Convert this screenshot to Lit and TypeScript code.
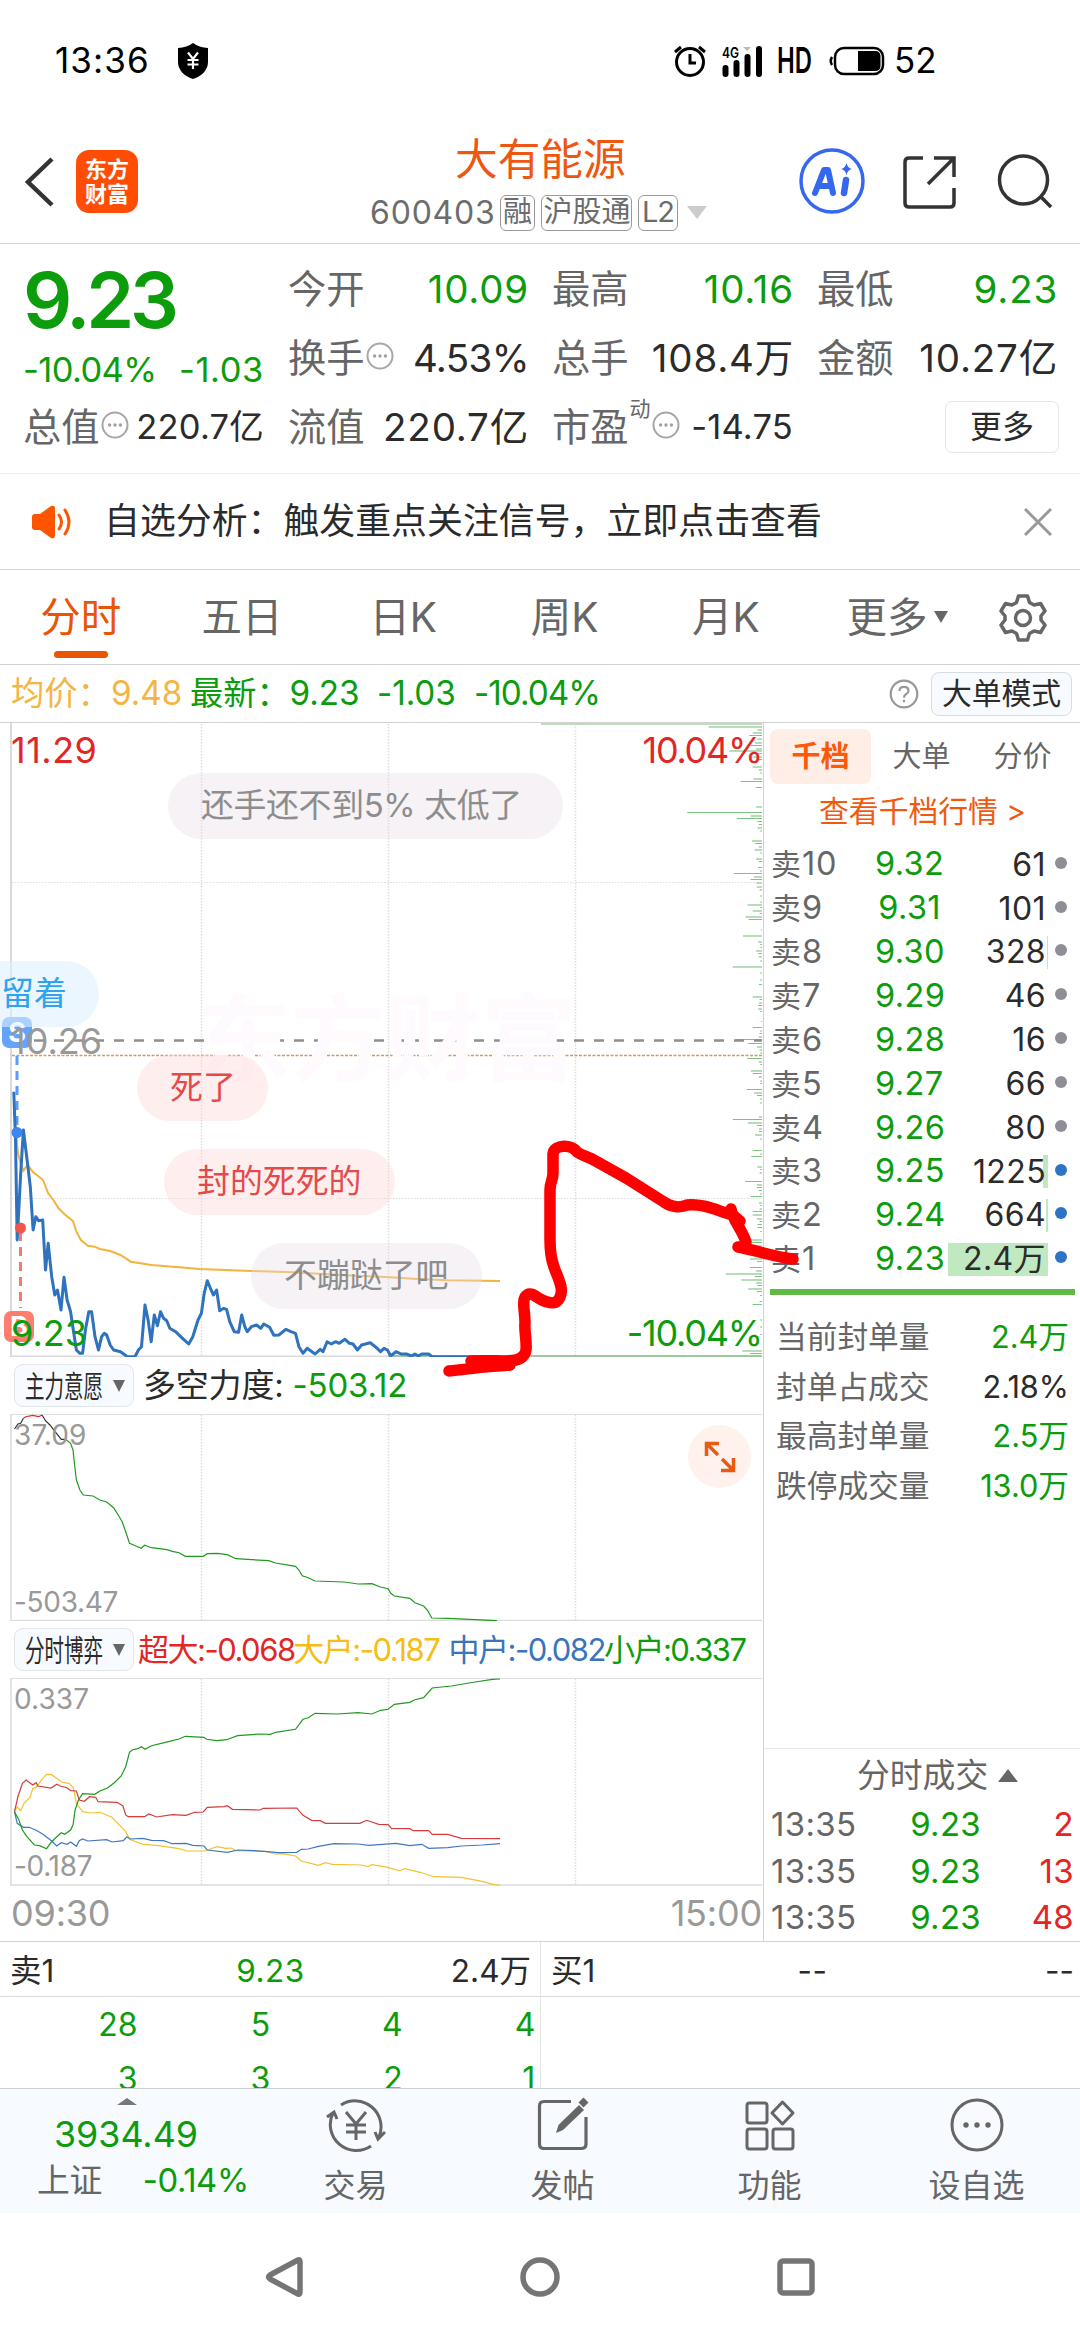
import { LitElement, html, svg, css } from "lit";
import { customElement } from "lit/decorators.js";
import { styleMap } from "lit/directives/style-map.js";

/* Series are stored as "x,y x,y ..." samples; each panel has its own vertical origin. */
const SX = 1 / 2.904;
const SY = 1 / 3;
const toPoints = (raw: string, originY: number) =>
  raw
    .trim()
    .split(/\s+/)
    .map((p) => {
      const [x, y] = p.split(",").map(Number);
      return `${(x * SX).toFixed(1)},${(originY + y * SY).toFixed(1)}`;
    })
    .join(" ");

const PRICE = `40,155 45,300 50,600 60,400 68,270 80,370 88,440 96,570 104,530 112,542 124,540 132,690 140,610 150,710 159,765 167,750 177,810 186,712 195,780 205,815 213,870 222,930 232,940 240,940 248,870 258,815 266,815 276,890 286,930 295,890 303,880 310,885 320,915 330,930 350,935 370,950 392,950 402,930 411,920 421,795 430,840 439,905 448,825 457,857 466,815 475,835 484,842 493,865 510,875 530,895 548,912 560,890 575,840 585,820 593,760 602,722 611,745 620,765 629,750 638,812 650,805 658,808 667,845 680,875 693,877 702,825 711,860 718,875 730,860 745,855 757,865 766,852 783,862 795,886 810,885 830,868 845,875 858,880 868,920 880,940 892,925 915,942 930,928 938,935 950,905 962,912 975,905 985,910 1002,898 1015,910 1025,912 1038,930 1050,915 1075,908 1090,920 1105,935 1115,925 1125,930 1135,948 1150,935 1165,942 1180,942 1195,948 1205,942 1215,948 1225,942 1245,942 1255,950 1450,950`;
const AVERAGE = `45,250 52,340 60,370 68,392 80,375 95,395 115,412 125,420 140,460 155,480 170,505 190,525 212,543 222,575 235,600 255,617 275,620 290,627 320,633 350,645 380,665 440,675 520,682 580,687 730,693 850,697 1000,706 1120,711 1200,716 1300,721 1452,723`;
const POWER: [string, string][] = [
  ["#333", "42,237 52,222 60,220 68,205"],
  ["#e02828", "68,205 75,200 95,196 112,200 122,195"],
  ["#333", "122,195 132,212 145,225 160,245 178,268 190,268"],
  ["#1f9a1f", "190,268 205,280 212,300 216,340 222,390 232,420 242,435 270,438 290,450 310,456 330,473 345,498 355,515 365,545 376,580 395,588 410,595 420,586 440,593 485,599 500,604 520,608 538,619 590,619 602,611 630,610 660,614 685,626 780,632 800,639 858,649 868,660 878,677 895,683 915,693 1000,696 1040,702 1080,701 1105,711 1127,716 1135,730 1145,738 1190,745 1205,758 1230,768 1242,782 1254,804 1300,805 1443,812"],
];
const GAME: [string, string][] = [
  ["#f2c230", "42,515 50,500 60,512 70,490 88,470 95,445 105,443 120,420 135,403 150,404 180,427 200,430 213,443 222,490 240,515 265,519 290,517 325,532 345,553 365,575 376,598 415,613 455,616 520,626 542,633 595,633 630,620 655,625 672,624 685,632 770,634 800,642 820,641 858,648 875,663 925,676 945,668 965,673 1050,675 1068,680 1080,674 1125,682 1160,692 1175,686 1220,697 1260,710 1340,712 1400,724 1435,734 1452,735"],
  ["#d83a3a", "42,515 52,470 65,430 76,420 95,435 105,428 110,438 148,444 165,433 175,438 195,443 205,452 222,453 230,480 245,484 260,470 278,472 285,485 340,487 357,498 365,525 372,530 420,530 432,522 455,531 500,524 540,526 565,517 590,516 602,502 650,500 660,497 675,508 755,510 765,505 862,504 880,526 905,541 930,542 945,550 1045,550 1065,541 1100,553 1127,554 1137,565 1190,566 1200,572 1245,572 1255,583 1300,583 1340,595 1452,596"],
  ["#3f78c0", "42,515 50,550 68,562 85,562 105,571 125,583 150,603 165,618 178,608 195,613 205,606 222,619 230,602 240,597 255,603 310,599 325,606 358,602 368,591 380,597 415,595 440,601 475,602 500,611 540,610 560,616 592,618 602,630 660,637 690,630 740,632 810,638 862,637 875,628 895,627 925,619 970,611 1040,612 1070,616 1150,610 1190,617 1225,613 1245,625 1300,623 1340,618 1400,615 1452,611"],
  ["#1f9a1f", "42,515 55,540 65,570 78,590 100,615 115,617 135,626 150,605 165,590 178,578 188,583 205,570 212,555 218,510 228,480 240,461 275,463 290,453 312,444 332,428 352,408 365,380 376,337 385,329 400,326 411,320 421,328 440,317 480,307 520,297 538,289 592,292 600,298 630,302 658,299 690,287 755,282 785,283 800,277 858,268 880,238 895,233 915,220 980,222 1040,218 1080,222 1105,211 1127,208 1145,193 1190,187 1205,179 1230,173 1255,144 1310,138 1380,126 1430,118 1452,117"],
];

/* Volume-at-price bars: [row, left end], growing leftwards from the right border. */
const UPPER = "80:490 90:632 98:618 107:608 118:632 128:625 137:612 146:628 154:550 163:635 172:620 181:630 200:618 210:636 220:640 238:620 247:583 265:627 320:628 339:428 348:612 357:572 367:632 375:636 384:632 394:640 422:616 431:625 440:636 450:624 460:640 478:628 487:636 505:634 514:640 523:563 532:622 541:612 550:628 560:630 570:638 588:640 606:640 616:603 625:640 634:618 643:638 652:597 661:606 690:642 708:590 726:634 735:640 745:640 754:628 763:634 772:636 782:640 800:560 820:640 840:640 855:636 892:618 901:638 910:636 919:634 928:634 937:640 965:642 985:618 994:640 1003:638 1012:636 1021:568 1031:604 1040:630 1050:638 1058:640 1067:640";
const LOWER = "57:602 66:636 75:640 94:613 103:618 112:636 122:640 131:640 149:600 158:622 167:630 176:640 190:640 232:636 241:560 250:604 259:630 268:636 277:636 286:625 296:640 333:618 342:640 351:614 380:632 389:640 400:638 425:596 434:630 443:630 453:636 462:640 471:612 490:636 499:640 508:638 517:618 526:618 536:630 545:638 555:632 565:632 575:640 600:615 609:610 618:620 637:615 646:630 656:610 665:630 683:610 692:628 702:540 711:624 720:585 730:628 739:632 748:605 757:630 767:640 785:638 795:618 840:640 860:640 885:640 932:588 941:610";
const histogram = (raw: string, originY: number) =>
  raw.split(" ").map((b) => {
    const [y, x] = b.split(":").map(Number);
    const w = (645 - x) * SX;
    return svg`<rect x=${762 - w} y=${Math.round(originY + y * SY - 1)} width=${w} height=${y % 2 ? 1 : 2} fill=${y % 2 ? "#7fc384" : "#b5deb8"} />`;
  });

const ASKS = [
  { n: "10", price: "9.32", vol: "61", bar: 0, big: false },
  { n: "9", price: "9.31", vol: "101", bar: 0, big: false },
  { n: "8", price: "9.30", vol: "328", bar: 1, big: false },
  { n: "7", price: "9.29", vol: "46", bar: 0, big: false },
  { n: "6", price: "9.28", vol: "16", bar: 0, big: false },
  { n: "5", price: "9.27", vol: "66", bar: 0, big: false },
  { n: "4", price: "9.26", vol: "80", bar: 0, big: false },
  { n: "3", price: "9.25", vol: "1225", bar: 5, big: true },
  { n: "2", price: "9.24", vol: "664", bar: 2, big: true },
  { n: "1", price: "9.23", vol: "2.4万", bar: 100, big: true },
];

const verticals = (y1: number, y2: number) =>
  [201, 388, 575].map(
    (x) => svg`<line x1=${x + 0.5} x2=${x + 0.5} y1=${y1} y2=${y2} stroke="#dcdcdc" stroke-width="1.5" stroke-dasharray="1.5 1.5" />`
  );

const infoDot = html`<svg class="info-dot" viewBox="0 0 28 28" fill="none"><circle cx="14" cy="14" r="12.5" stroke="#a6a6a6" stroke-width="2" /><g fill="#a0a0a0"><circle cx="8.6" cy="14" r="1.7" /><circle cx="14" cy="14" r="1.7" /><circle cx="19.4" cy="14" r="1.7" /></g></svg>`;

@customElement("app-root")
export class AppRoot extends LitElement {
  static styles = css`
    :host { display: block; width: 1080px; height: 2340px; overflow: hidden; background: #fff; color: #2b2b2b;
      font-family: Inter, "Noto Sans CJK SC", sans-serif; font-size: 33px; line-height: 1; }
    * { box-sizing: border-box; }
    svg { display: block; flex: none; }
    span { white-space: nowrap; }
    .green { color: #0c9c0c; }
    .red { color: #e22626; }
    .grey { color: #666; }

    .status { height: 120px; display: flex; align-items: center; padding: 1px 143px 0 55px; color: #000; font-size: 35px; }
    .status .clock { width: 123px; letter-spacing: 1.1px; }
    .status .spring { flex: 1; }
    .status .hd { font-size: 35px; font-weight: 600; transform: scaleX(.68); transform-origin: 0 50%; width: 52px; margin-left: -1px; }
    .status .pct { margin-left: 9px; width: 43px; }
    .status .alarm { margin-right: 15px; }
    .status .signal { margin-right: 15px; }

    .header { height: 124px; border-bottom: 1px solid #d2d2d2; display: flex; align-items: flex-start; }
    .back { margin: 36px 22px 0 24px; }
    .logo { margin-top: 30px; width: 62px; height: 63px; border-radius: 13px; background: #ff4d05; color: #fff; font-size: 22px;
      line-height: 25px; font-weight: 700; display: grid; place-content: center; }
    .names { flex: 1; margin-left: 232px; height: 123px; display: flex; flex-direction: column; }
    .title { margin: 18px 0 0 85px; font-size: 42.7px; color: #ee5711; line-height: 44px; }
    .sub { display: flex; align-items: center; margin-top: 12px; height: 37px; gap: 6px; color: #6c6c6c; font-size: 32px; }
    .sub .code { letter-spacing: .8px; width: 124px; }
    .tag { border: 1.5px solid #9a9a9a; border-radius: 6px; height: 36px; line-height: 32px; padding: 0 1.5px; font-size: 29px; text-align: center; }
    .tag.l2 { width: 40px; font-size: 29px; letter-spacing: -1px; }
    .tag.rong { width: 35px; }
    .tag.hu { width: 91px; }
    .caret { width: 0; height: 0; border: 10px solid transparent; border-bottom: 0; border-top: 13px solid #ccc; margin-left: 3px; }
    .tools { display: flex; margin-right: 26px; padding-top: 28px; }
    .tools svg + svg { margin-left: 33.5px; }

    .quote { height: 230px; border-bottom: 1px solid #ececec; display: grid; grid-template-columns: 241px 240px 241px 240px; column-gap: 24px;
      padding-left: 23px; padding-top: 11px; grid-template-rows: 69px 69px 69px; font-size: 38.5px; }
    .cell { display: flex; align-items: center; }
    .cell .v { margin-left: auto; letter-spacing: .8px; margin-right: -1px; }
    .cell .v.pc { letter-spacing: -.6px; }
    .cell .grey { font-size: 38.3px; }
    .lead { grid-row: 1 / span 2; display: flex; flex-direction: column; }
    .big { font-size: 77px; font-weight: 600; letter-spacing: -4.2px; margin-top: 7px; height: 77px; }
    .chg { display: flex; justify-content: space-between; font-size: 34.5px; margin-top: 14px; letter-spacing: -.6px; }
    .chg span + span { letter-spacing: .6px; }
    .info-dot { width: 28px; height: 28px; margin-left: 1px; margin-top: -6px; }
    .small .v { font-size: 34.5px; letter-spacing: .2px; margin-right: 0; }
    .sup { font-size: 21px; color: #666; align-self: flex-start; margin: 5px 0 0 1px; }
    .more { justify-self: end; align-self: center; width: 114px; height: 52px; border: 1.5px solid #e6e6e6; border-radius: 7px;
      display: grid; place-content: center; font-size: 32px; margin: 0 -2px 1px 0; }

    .notice { height: 96px; border-bottom: 1px solid #d6d6d6; display: flex; align-items: center; padding: 0 28px 0 31px; font-size: 35.9px; }
    .notice span { margin-left: 30px; flex: 1; }

    .tabs { height: 95px; border-bottom: 1px solid #d2d2d2; display: flex; color: #666; font-size: 40.5px; }
    .tab { width: 161.3px; height: 94px; display: flex; flex-direction: column; align-items: center; padding-top: 27px; line-height: 41px; }
    .tab.on { color: #ea5504; }
    .tab.on::after { content: ""; width: 54px; height: 7px; border-radius: 4px; background: #ea5504; margin-top: 13px; }
    .tab.menu { flex-direction: row; align-items: flex-start; width: 110px; margin-left: 40px; gap: 7px; }
    .tab.menu i { width: 0; height: 0; margin-top: 14px; border: 7px solid transparent; border-bottom: 0; border-top: 12px solid #666; }
    .gear { margin: 23px 0 0 42px; }

    .prices { height: 58px; border-bottom: 1px solid #d2d2d2; display: flex; align-items: center; padding: 1px 8px 0 11px; font-size: 33.3px; }
    .prices .avg { color: #f5b544; width: 179px; }
    .prices .last { width: 187px; letter-spacing: -.1px; }
    .prices .d { width: 97px; letter-spacing: -.1px; }
    .prices .pc { letter-spacing: -1px; }
    .prices .spring { flex: 1; }
    .mode { width: 141px; height: 44px; border: 1.5px solid #d9dce3; border-radius: 8px; background: #f7faff; font-size: 29.8px; display: grid; place-content: center; margin-left: 12px; }

    .main { position: relative; height: 1219px; border-bottom: 1px solid #d2d2d2; display: flex; }
    .charts { width: 764px; border-right: 1px solid #d2d2d2; display: flex; flex-direction: column; }
    .plot { position: relative; }
    .lab { position: absolute; font-size: 36px; letter-spacing: 0; }
    .lab.s { font-size: 28px; color: #999; letter-spacing: .1px; }
    .tl { left: 11px; top: 9px; letter-spacing: .5px; }
    .tr { right: 1px; top: 9px; letter-spacing: -1.3px; }
    .ml { left: 11px; top: 300px; color: #999; }
    .bl { left: 11px; top: 592px; }
    .br { right: 1px; top: 592px; letter-spacing: -1.2px; }
    .s.tl { left: 14px; }
    .s.p1 { top: 7px; }
    .s.p2 { top: 174px; left: 14px; letter-spacing: -.3px; }
    .mark { position: absolute; left: 196px; top: 265px; font-size: 95px; font-weight: 700; line-height: 104px; color: #fefafe; }
    .chip { position: absolute; height: 66px; border-radius: 33px; line-height: 65px; font-size: 32.9px; padding-left: 33px; }
    .chip.g { background: rgba(231, 221, 231, .38); color: #8d8d8d; }
    .chip.r { background: rgba(255, 214, 214, .42); color: #e34a4a; }
    .chip.b { background: rgba(222, 240, 254, .6); color: #2fa3ee; }
    .c1 { left: 168px; top: 50px; width: 395px; letter-spacing: -.35px; }
    .c2 { left: -32px; top: 238px; width: 131px; }
    .c3 { left: 137px; top: 332px; width: 131px; }
    .c4 { left: 164px; top: 426px; width: 231px; }
    .c5 { left: 251px; top: 520px; width: 231px; }
    .badge { position: absolute; width: 30px; height: 31px; border-radius: 7px; color: #fff; font-size: 27px; line-height: 31px; font-weight: 700; text-align: center; }
    .badge.sell { left: 2px; top: 294px; background: #64a4ff; }
    .badge.buy { left: 4px; top: 588px; background: #ff7d6e; }

    .bar { height: 57px; display: flex; align-items: center; padding-left: 14px; }
    .pick { width: 120px; height: 43px; border: 1.5px solid #e2e5ea; border-radius: 9px; background: #f7faff; display: flex; align-items: center; padding-left: 10px; }
    .pick span { font-size: 30px; transform: scaleX(.65); transform-origin: 0 50%; width: 88px; }
    .pick i { width: 0; height: 0; border: 6.5px solid transparent; border-bottom: 0; border-top: 12px solid #666; }
    .force { margin-left: 9px; font-size: 33px; letter-spacing: -.2px; }
    .force .green { margin-left: 0; }
    .quad { display: flex; font-size: 31px; margin-left: 4px; letter-spacing: -1.5px; }
    .quad span { width: 155.3px; }
    .quad .yellow { color: #f5bd15; }
    .quad .blue { color: #3a74bc; }
    .expand { position: absolute; left: 688px; top: 11px; width: 63px; height: 63px; border-radius: 50%; background: #fff1ec; display: grid; place-content: center; }
    .axis { display: flex; justify-content: space-between; padding: 9px 1px 0 11px; font-size: 36px; color: #999; letter-spacing: -.2px; }

    .side { width: 316px; padding: 6px 6px 0; display: flex; flex-direction: column; }
    .stabs { display: flex; font-size: 29px; color: #666; height: 55px; }
    .stabs span { width: 101px; line-height: 55px; text-align: center; }
    .stabs .on { background: #ffeee6; color: #fa5a0a; font-weight: 700; border-radius: 8px; }
    .link { height: 59px; line-height: 55px; text-align: center; font-size: 29.8px; color: #f2590f; padding-left: 1px; }
    .ask { height: 44px; display: grid; grid-template-columns: 104px 66px 1fr 26px; align-items: center; padding-left: 1px; font-size: 32.5px; letter-spacing: .4px; }
    .ask .n { color: #666; letter-spacing: .9px; }
    .ask .n b { font-weight: 400; font-size: 30px; letter-spacing: 0; margin-right: 1px; }
    .ask .p { color: #0c9c0c; text-align: right; }
    .ask .vol { display: grid; align-items: center; justify-items: end; }
    .ask .vol > * { grid-area: 1 / 1; }
    .ask .fill { height: 33px; background: #c0e8c1; }
    .ask .vol span { padding-right: 2px; }
    .ask .vol { font-size: 32px; }
    .ask .dot { width: 12px; height: 12px; border-radius: 50%; background: #8e8e96; margin: -4px 0 0 7px; }
    .ask .dot.big { background: #2f74c4; }
    .rule { height: 6px; background: #60b845; margin: 8px 0 17px; width: 305px; }
    .stat { height: 50px; display: flex; align-items: center; justify-content: space-between; padding: 0 5px 0 6px; font-size: 30.7px; }
    .trades { margin: 236px -6px 0; border-top: 1px solid #e8e8e8; padding: 0 6px 0 7px; }
    .trades .head { display: flex; align-items: center; gap: 10px; height: 53px; padding-left: 86px; font-size: 32.8px; color: #666; }
    .trades .head i { width: 0; height: 0; border: 10px solid transparent; border-top: 0; border-bottom: 13px solid #666; }
    .trade { display: grid; grid-template-columns: 84px 126px 1fr; height: 46.5px; align-items: center; font-size: 33px; letter-spacing: .3px; }
    .trade > * + * { text-align: right; }
    .ink { position: absolute; left: 0; top: 0; pointer-events: none; }

    .book { height: 55px; border-bottom: 1px solid #dcdcdc; display: flex; font-size: 31.5px; }
    .half { width: 540px; display: grid; grid-template-columns: 1fr 1fr 1fr; align-items: center; padding: 3px 9px 0 10px; }
    .half + .half { border-left: 1px solid #e4e4e4; padding-right: 6px; }
    .half > :nth-child(2) { text-align: center; letter-spacing: .5px; }
    .half > :nth-child(3) { text-align: right; }
    .depth { height: 91px; overflow: hidden; display: flex; }
    .queue { width: 541px; border-right: 1px solid #e4e4e4; display: grid; grid-template-columns: repeat(4, 132.6px); grid-auto-rows: 54px;
      padding: 1px 0 0 5px; text-align: right; align-items: center; font-size: 32px; }

    .nav { height: 125px; background: #f7faff; border-top: 1px solid #ccd0d6; display: flex; color: #666; font-size: 32px; }
    .index { width: 252px; padding-left: 37px; }
    .index i { display: block; width: 0; height: 0; margin: 9px 0 0 80px; border: 10px solid transparent; border-top: 0; border-bottom: 7px solid #777; }
    .index .pts { font-size: 35.8px; margin: 12px 0 11px 17px; }
    .index .row { display: flex; gap: 41px; align-items: center; font-size: 32.8px; letter-spacing: -.4px; }
    .item { width: 207px; display: flex; flex-direction: column; align-items: center; padding-top: 8px; gap: 17px; }
    .sysnav { height: 127px; display: flex; align-items: center; justify-content: center; gap: 212px; }
  `;

  render() {
    return html`
      <div class="status">
        <span class="clock">13:36</span>
        <svg width="30" height="36" viewBox="0 0 30 36"><path d="M15 0 C19 3 24 4.500 30 5 V19 C30 27 24 33 15 36 C6 33 0 27 0 19 V5 C6 4.500 11 3 15 0Z" fill="#000" /><path d="M10 9.500 L15 16 L20 9.500 M15 16 V26 M9.500 17 H20.500 M9.500 21.500 H20.500" stroke="#fff" stroke-width="2.200" fill="none" /></svg>
        <div class="spring"></div>
        <svg class="alarm" width="34" height="34" viewBox="0 0 34 34" fill="none" stroke="#000" stroke-width="3"><circle cx="17" cy="18" r="13.500" /><path d="M17 10 V19 H23 M2 8 L8 3 M32 8 L26 3" /></svg>
        <svg class="signal" width="41" height="34" viewBox="0 0 41 34"><text x="0" y="14" font-family="Inter" font-size="14" font-weight="600" textLength="17" lengthAdjust="spacingAndGlyphs">4G</text><path d="M3.500 24 V30 M14.500 19 V30 M25.500 13 V30 M37 5 V30" stroke="#000" stroke-width="6" stroke-linecap="round" /><path d="M21 3 h8 l-4 4z" fill="#bbb" /></svg>
        <span class="hd">HD</span>
        <svg width="56" height="30" viewBox="0 0 56 30"><rect x="6" y="2" width="48" height="26" rx="9" fill="none" stroke="#000" stroke-width="2.500" /><path d="M29 5 H46 Q51.500 5 51.500 10.500 V19.500 Q51.500 25 46 25 H29Z" /><path d="M3 11 Q0.500 15 3 19" stroke="#000" stroke-width="2.500" fill="none" /></svg>
        <span class="pct">52</span>
      </div>

      <div class="header">
        <svg class="back" width="30" height="52" viewBox="0 0 30 52" fill="none" stroke="#333" stroke-width="4.500"><path d="M28 3 L4 26 L28 49" /></svg>
        <div class="logo"><span>东方</span><span>财富</span></div>
        <div class="names">
          <span class="title">大有能源</span>
          <div class="sub"><span class="code">600403</span><span class="tag rong">融</span><span class="tag hu">沪股通</span><span class="tag l2">L2</span><i class="caret"></i></div>
        </div>
        <div class="tools">
          <svg width="66" height="66" viewBox="0 0 66 66"><circle cx="33" cy="33" r="31" fill="none" stroke="#3568f0" stroke-width="3.500" /><path d="M16 45 L25 22 H29 L34 45 M19 38 H32" fill="none" stroke="#3568f0" stroke-width="6" stroke-linejoin="round" stroke-linecap="round" /><path d="M47 32 L45 45" stroke="#3568f0" stroke-width="6.500" stroke-linecap="round" /><path d="M47.500 15 Q48.500 20 53 21 Q48.500 22 47.500 27 Q46.500 22 42 21 Q46.500 20 47.500 15Z" fill="#3568f0" /></svg>
          <svg width="62" height="66" viewBox="0 0 62 66" fill="none" stroke="#333" stroke-width="3.500"><path d="M24 10 H10 Q6 10 6 14 V55 Q6 59 10 59 H51 Q55 59 55 55 V40 M35 10 H55 V29 M55 10 L29 36" /></svg>
          <svg width="60" height="66" viewBox="0 0 60 66" fill="none" stroke="#333" stroke-width="3.500"><circle cx="29.500" cy="32" r="24" /><path d="M46 48 L57 59" /></svg>
        </div>
      </div>

      <div class="quote">
        <div class="lead"><span class="big green">9.23</span><div class="chg green"><span>-10.04%</span><span>-1.03</span></div></div>
        <div class="cell"><span class="grey">今开</span><span class="v green">10.09</span></div>
        <div class="cell"><span class="grey">最高</span><span class="v green">10.16</span></div>
        <div class="cell"><span class="grey">最低</span><span class="v green">9.23</span></div>
        <div class="cell"><span class="grey">换手</span>${infoDot}<span class="v pc">4.53%</span></div>
        <div class="cell"><span class="grey">总手</span><span class="v">108.4万</span></div>
        <div class="cell"><span class="grey">金额</span><span class="v">10.27亿</span></div>
        <div class="cell small"><span class="grey">总值</span>${infoDot}<span class="v">220.7亿</span></div>
        <div class="cell"><span class="grey">流值</span><span class="v">220.7亿</span></div>
        <div class="cell small"><span class="grey">市盈</span><span class="sup">动</span>${infoDot}<span class="v">-14.75</span></div>
        <div class="more">更多</div>
      </div>

      <div class="notice">
        <svg width="43" height="34" viewBox="0 0 43 34"><path d="M1 12 Q1 9 4 9 H9 L20 1 Q24 0 24 3 V31 Q24 34 20 33 L9 25 H4 Q1 25 1 22Z" fill="#ff5500" /><path d="M28 10 Q33 17 28 24 M34 5 Q42 17 34 29" fill="none" stroke="#ff5500" stroke-width="3" stroke-linecap="round" /></svg>
        <span>自选分析：触发重点关注信号，立即点击查看</span>
        <svg width="28" height="28" viewBox="0 0 28 28" stroke="#999" stroke-width="3"><path d="M1 1 L27 27 M27 1 L1 27" /></svg>
      </div>

      <div class="tabs">
        <div class="tab on">分时</div><div class="tab">五日</div><div class="tab">日K</div><div class="tab">周K</div><div class="tab">月K</div>
        <div class="tab menu"><span>更多</span><i></i></div>
        <svg class="gear" width="50" height="50" viewBox="0 0 50 50" fill="none" stroke="#666" stroke-width="3.500" stroke-linejoin="round"><path d="M20.500 3 H29.500 L31.500 9.500 L36 12 L42.500 10.500 L47 18 L43 23 V27 L47 32 L42.500 39.500 L36 38 L31.500 40.500 L29.500 47 H20.500 L18.500 40.500 L14 38 L7.500 39.500 L3 32 L7 27 V23 L3 18 L7.500 10.500 L14 12 L18.500 9.500Z" /><circle cx="25" cy="25" r="7.500" /></svg>
      </div>

      <div class="prices">
        <span class="avg">均价：9.48</span><span class="green last">最新：9.23</span><span class="green d">-1.03</span><span class="green pc">-10.04%</span>
        <div class="spring"></div>
        <svg width="30" height="30" viewBox="0 0 30 30" fill="none" stroke="#999" stroke-width="2.200"><circle cx="15" cy="15" r="13.300" /><path d="M10.500 12 Q10.500 7.800 15 7.800 Q19.500 7.800 19.500 11.800 Q19.500 14 17 15.300 Q15 16.500 15 18.800 M15 20.800 V23.200" /></svg>
        <div class="mode">大单模式</div>
      </div>

      <div class="main">
        <div class="charts">
          <div class="plot">
            <span class="mark">东方财富</span>
            <svg width="763" height="634" viewBox="0 723 763 634" fill="none">
              <path d="M11 723 V1356.500 H500" stroke="#d9d9d9" stroke-width="2" />
              ${verticals(724, 1356)}
              <path d="M12 882.500 H762 M12 1198.500 H762" stroke="#dcdcdc" stroke-dasharray="1.500 1.500" />
              <rect x="541" y="723" width="221" height="2" fill="#bfdcbf" />
              ${histogram(UPPER, 700)}${histogram(LOWER, 1040)}
              <path d="M34 1040.500 H762" stroke="#8f8f8f" stroke-width="2.500" stroke-dasharray="10 10" />
              <path d="M12 1055.500 H762" stroke="#cf9a68" stroke-width="1.700" stroke-dasharray="3 1.500" />
              <path d="M388 1356 H762" stroke="#9cc99f" stroke-width="2" />
              <path d="M17 1056 V1130" stroke="#5a9cf8" stroke-width="3" stroke-dasharray="9 6" />
              <path d="M20.500 1232 V1308" stroke="#f47a6c" stroke-width="3" stroke-dasharray="9 6" />
              <polyline points=${toPoints(AVERAGE, 1040)} stroke="#f3b33c" stroke-width="2" />
              <polyline points=${toPoints(PRICE, 1040)} stroke="#2f72bd" stroke-width="3" stroke-linejoin="round" />
              <circle cx="17" cy="1132.500" r="5.500" fill="#3c86f2" /><circle cx="20.500" cy="1228" r="5.500" fill="#f05548" />
            </svg>
            <span class="badge sell">S</span><span class="badge buy">B</span>
            <span class="chip g c1">还手还不到5% 太低了</span>
            <span class="chip b c2">留着</span>
            <span class="chip r c3">死了</span>
            <span class="chip r c4">封的死死的</span>
            <span class="chip g c5">不蹦跶了吧</span>
            <span class="lab tl red">11.29</span><span class="lab tr red">10.04%</span>
            <span class="lab ml">10.26</span>
            <span class="lab bl green">9.23</span><span class="lab br green">-10.04%</span>
          </div>
          <div class="bar"><div class="pick"><span>主力意愿</span><i></i></div><span class="force">多空力度: <span class="green">-503.12</span></span></div>
          <div class="plot">
            <svg width="763" height="207" viewBox="0 1414 763 207" fill="none">
              <path d="M11 1414.500 H762" stroke="#e0e0e0" /><path d="M11 1414 V1620.500 H762" stroke="#dcdcdc" stroke-width="1.600" />
              ${verticals(1415, 1620)}
              ${POWER.map(([c, p]) => svg`<polyline points=${toPoints(p, 1350)} stroke=${c} stroke-width="1.200" />`)}
            </svg>
            <span class="lab s tl p1">37.09</span><span class="lab s p2">-503.47</span>
            <div class="expand"><svg width="34" height="34" viewBox="0 0 34 34" fill="none" stroke="#ea5a10" stroke-width="3.500"><path d="M3.500 16 V3.500 H16 M3.500 3.500 L15 15 M30.500 18 V30.500 H18 M30.500 30.500 L19 19" /></svg></div>
          </div>
          <div class="bar"><div class="pick"><span>分时博弈</span><i></i></div>
            <div class="quad"><span class="red">超大:-0.068</span><span class="yellow">大户:-0.187</span><span class="blue">中户:-0.082</span><span class="green">小户:0.337</span></div></div>
          <div class="plot">
            <svg width="763" height="208" viewBox="0 1678 763 208" fill="none">
              <path d="M11 1678.500 H762" stroke="#e0e0e0" /><path d="M11 1678 V1885 H762" stroke="#dcdcdc" stroke-width="1.600" />
              ${verticals(1679, 1884)}
              ${GAME.map(([c, p]) => svg`<polyline points=${toPoints(p, 1640)} stroke=${c} stroke-width="1.200" />`)}
            </svg>
            <span class="lab s tl p1">0.337</span><span class="lab s p2">-0.187</span>
          </div>
          <div class="axis"><span>09:30</span><span>15:00</span></div>
        </div>

        <div class="side">
          <div class="stabs"><span class="on">千档</span><span>大单</span><span>分价</span></div>
          <div class="link">查看千档行情 &gt;</div>
          ${ASKS.map(
            (a) => html`<div class="ask"><span class="n"><b>卖</b>${a.n}</span><span class="p">${a.price}</span>
              <div class="vol"><div class="fill" style=${styleMap({ width: `${a.bar}px` })}></div><span>${a.vol}</span></div>
              <i class="dot ${a.big ? "big" : ""}"></i></div>`
          )}
          <div class="rule"></div>
          <div class="stat"><span class="grey">当前封单量</span><span class="green">2.4万</span></div>
          <div class="stat"><span class="grey">封单占成交</span><span>2.18%</span></div>
          <div class="stat"><span class="grey">最高封单量</span><span class="green">2.5万</span></div>
          <div class="stat"><span class="grey">跌停成交量</span><span class="green">13.0万</span></div>
          <div class="trades">
            <div class="head"><span>分时成交</span><i></i></div>
            ${["2", "13", "48"].map((v) => html`<div class="trade"><span class="grey">13:35</span><span class="green">9.23</span><span class="red">${v}</span></div>`)}
          </div>
        </div>

        <svg class="ink" width="1080" height="700" viewBox="0 723 1080 700" fill="none" stroke="#fe0000" stroke-width="11.500" stroke-linecap="round" stroke-linejoin="round">
          <path d="M449 1371 C462 1370 472 1368 484 1367 C495 1366 503 1366 510 1365 M471 1361 C490 1360 505 1362 516 1360 C524 1358 526 1352 526 1350 C527 1341 524 1330 525 1323 C525 1312 522 1302 525 1297 C529 1291 534 1295 540 1299 C546 1302 552 1304 556 1302 C561 1299 562 1291 561 1287 C560 1281 556 1273 554 1267 C550 1256 550 1248 550 1240 V1190 C550 1182 553 1180 553 1173 V1154 C554 1144 572 1144 577 1152 C581 1155 586 1156 592 1159 L626 1178 L664 1202 C671 1207 680 1208 687 1205 C704 1203 720 1212 733 1215 L740 1221 M731 1209 C733 1221 742 1229 746 1242 M738 1247 C755 1250 775 1257 793 1259" />
        </svg>
      </div>

      <div class="book">
        <div class="half"><span>卖1</span><span class="green">9.23</span><span>2.4万</span></div>
        <div class="half"><span>买1</span><span>--</span><span>--</span></div>
      </div>
      <div class="depth"><div class="queue green"><span>28</span><span>5</span><span>4</span><span>4</span><span>3</span><span>3</span><span>2</span><span>1</span></div></div>

      <div class="nav">
        <div class="index"><i></i><div class="pts green">3934.49</div><div class="row"><span>上证</span><span class="green">-0.14%</span></div></div>
        <div class="item"><svg width="60" height="56" viewBox="0 0 60 56" fill="none" stroke="#666" stroke-width="3"><path d="M15 8 A26 26 0 0 1 53 40 M45 49 A26 26 0 0 1 7 16 M1 20 L8 15 L11 22 M59 35 L52 42 L49 35 M20 15 L30 27 L40 15 M30 27 V43 M20 28 H40 M20 35 H40" /></svg><span>交易</span></div>
        <div class="item"><svg width="56" height="56" viewBox="0 0 56 56" fill="none" stroke="#666" stroke-width="3.200"><path d="M36 4.500 H9 Q4.500 4.500 4.500 9 V47 Q4.500 51.500 9 51.500 H46 Q51 51.500 51 47 V20" /><path d="M21 36 L23.500 28 L44 8 L49 13 L28 33Z" fill="#666" stroke="none" /><path d="M46 8 L51 3" stroke-width="7" /></svg><span>发帖</span></div>
        <div class="item"><svg width="52" height="56" viewBox="0 0 52 56" fill="none" stroke="#666" stroke-width="3" stroke-linejoin="round"><rect x="3" y="6" width="20" height="20" rx="2.500" /><rect x="3" y="32" width="20" height="20" rx="2.500" /><rect x="29" y="32" width="20" height="20" rx="2.500" /><path d="M38.500 5 L49 16 L38.500 27 L28 16Z" /></svg><span>功能</span></div>
        <div class="item"><svg width="56" height="56" viewBox="0 0 56 56" fill="none" stroke="#666" stroke-width="3"><circle cx="28" cy="28" r="25" /><g fill="#666" stroke="none"><circle cx="17" cy="28" r="2.700" /><circle cx="28" cy="28" r="2.700" /><circle cx="39" cy="28" r="2.700" /></g></svg><span>设自选</span></div>
      </div>

      <div class="sysnav">
        <svg width="44" height="44" viewBox="0 0 44 44" fill="none" stroke="#757575" stroke-width="5.500" stroke-linejoin="round"><path d="M36 5 Q38 4 38 7 V37 Q38 40 36 39 L8 24 Q5 22 8 20Z" /></svg>
        <svg width="44" height="44" viewBox="0 0 44 44" fill="none" stroke="#757575" stroke-width="5.500"><circle cx="22" cy="22" r="17" /></svg>
        <svg width="44" height="44" viewBox="0 0 44 44" fill="none" stroke="#757575" stroke-width="5.500"><rect x="6" y="6" width="32" height="32" rx="3" /></svg>
      </div>
    `;
  }
}
